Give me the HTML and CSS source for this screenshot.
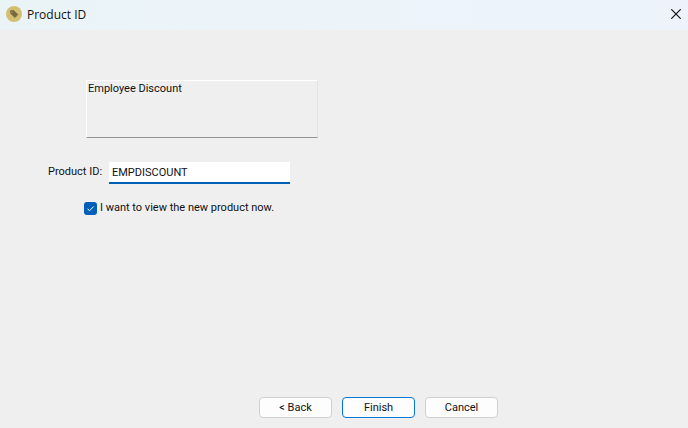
FILE: index.html
```
<!DOCTYPE html>
<html lang="en">
<head>
  <meta charset="UTF-8">
  <meta name="viewport" content="width=device-width, initial-scale=1.0">
  <title>Product ID</title>
  <link rel="stylesheet" href="styles.css">
</head>
<body>
  <header class="titlebar">
    <svg class="app-icon" viewBox="0 0 16 16" aria-hidden="true">
      <circle cx="8" cy="8" r="8" fill="#d3bf73" />
      <path d="M4.4 4.8 L7.6 4.4 L11.8 8.5 L9 11.6 L4.8 7.6 Z" fill="#75673f" stroke="#75673f" stroke-width="0.8" stroke-linejoin="round" />
      <circle cx="6" cy="6" r="0.6" fill="#d3bf73" />
    </svg>
    <h1>Product ID</h1>
    <button type="button" class="close-button" aria-label="Close">
      <svg viewBox="0 0 10 10" aria-hidden="true">
        <path d="M0.3 0.3 L9.7 9.7 M9.7 0.3 L0.3 9.7" fill="none" stroke="#111" stroke-width="1.2" />
      </svg>
    </button>
  </header>

  <form class="wizard" id="product-form">
    <main class="content">
      <div class="description">Employee Discount</div>
      <div class="field">
        <label for="product-id">Product ID:</label>
        <input type="text" id="product-id" value="EMPDISCOUNT" spellcheck="false" />
      </div>
      <div class="option">
        <input type="checkbox" id="view-product" checked />
        <label for="view-product">I want to view the new product now.</label>
      </div>
    </main>
    <footer class="actions">
      <button type="button">&lt; Back</button>
      <button type="submit" class="default">Finish</button>
      <button type="button">Cancel</button>
    </footer>
  </form>

  <script>
    document.getElementById('product-form').addEventListener('submit', (e) => {
      e.preventDefault();
    });
  </script>
</body>
</html>
```
FILE: styles.css
```
* {
  box-sizing: border-box;
}
body {
  font-family: Roboto, "Liberation Sans", sans-serif;
  font-size: 11px;
  line-height: 16px;
  margin: 0;
  display: flex;
  flex-direction: column;
  min-height: 100vh;
  background: #efefef;
  color: #111;
}
.titlebar {
  display: flex;
  align-items: center;
  gap: 5px;
  height: 30px;
  padding: 0 7px 2px 6px;
  background: linear-gradient(90deg, #eaf4f7, #eef3fb);
}
.app-icon {
  width: 16px;
  height: 16px;
}
.titlebar h1 {
  flex: 1;
  margin: 0;
  padding-top: 2px;
  font-family: "Open Sans", "Noto Sans", sans-serif;
  font-size: 12px;
  font-weight: normal;
}
.close-button {
  display: flex;
  padding: 0;
  border: none;
  background: none;
}
.close-button svg {
  width: 10px;
  height: 10px;
}
.wizard {
  flex: 1;
  display: flex;
  flex-direction: column;
  justify-content: space-between;
}
.content {
  padding: 50px 48px 0;
}
.description {
  width: 232px;
  height: 58px;
  margin-left: 38px;
  padding: 0 1px;
  border: 1px solid #fff;
  border-right-color: #e4e4e4;
  border-bottom-color: #949494;
}
.field {
  display: flex;
  align-items: center;
  margin-top: 24px;
}
.field label {
  width: 61px;
  padding-bottom: 2px;
}
.field input {
  width: 181px;
  height: 22px;
  padding: 0 3px;
  border: none;
  border-bottom: 2px solid #005fb8;
  outline: none;
  background: #fff;
  color: #111;
  font: inherit;
}
.option {
  display: flex;
  align-items: center;
  gap: 3px;
  margin: 16px 0 0 36px;
}
.option input {
  appearance: none;
  width: 13px;
  height: 13px;
  margin: 0;
  border-radius: 3px;
  background: #005fb8 url("data:image/svg+xml,%3Csvg xmlns='http://www.w3.org/2000/svg' viewBox='0 0 13 13'%3E%3Cpath d='M3.5 6.7 L5.5 8.7 L9.7 4.5' fill='none' stroke='white'/%3E%3C/svg%3E");
}
.option input:not(:checked) {
  border: 1px solid #888;
  background: #fff;
}
.actions {
  display: flex;
  gap: 10px;
  padding: 0 16px 10px 259px;
}
.actions button {
  width: 73px;
  height: 21px;
  padding: 0;
  border: 1px solid #d0d0d0;
  border-radius: 4px;
  background: #fdfdfd;
  color: #111;
  font: inherit;
}
.actions .default {
  border-color: #0078d4;
}
```
